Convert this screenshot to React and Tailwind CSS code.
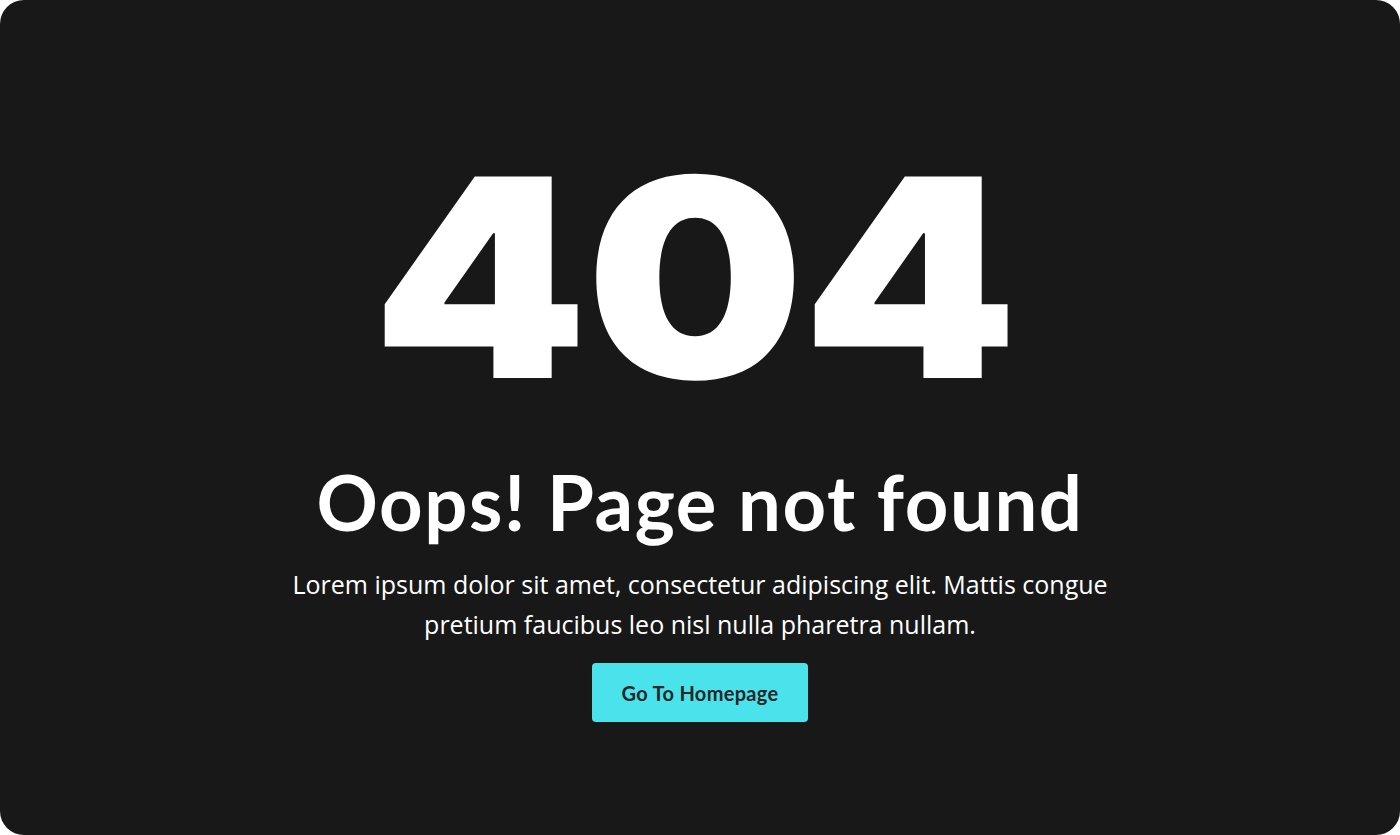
export default function App() {
  return (
    <div className="w-[1400px] h-[835px] bg-white">
      <div className="w-full h-full bg-[#181818] rounded-[24px] flex flex-col items-center pt-[139px]">
        <div className="mr-[12px] text-white font-['Inter',sans-serif] font-black text-[277px] leading-none tracking-[-2px] scale-x-[1.11]">
          404
        </div>
        <h1 className="mt-[48px] text-white font-['Lato',sans-serif] font-bold text-[76px] leading-none tracking-[1.6px]">
          Oops! Page not found
        </h1>
        <p className="mt-[24px] text-white font-['Open_Sans',sans-serif] text-[25px] leading-[40px] text-center w-[860px]">
          Lorem ipsum dolor sit amet, consectetur adipiscing elit. Mattis congue pretium faucibus leo nisl nulla pharetra nullam.
        </p>
        <button className="mt-[19px] w-[216px] h-[59px] bg-[#4be3eb] rounded-[4px] text-[#262626] font-['Lato',sans-serif] font-bold text-[20px] tracking-[0.3px]">
          Go To Homepage
        </button>
      </div>
    </div>
  );
}
